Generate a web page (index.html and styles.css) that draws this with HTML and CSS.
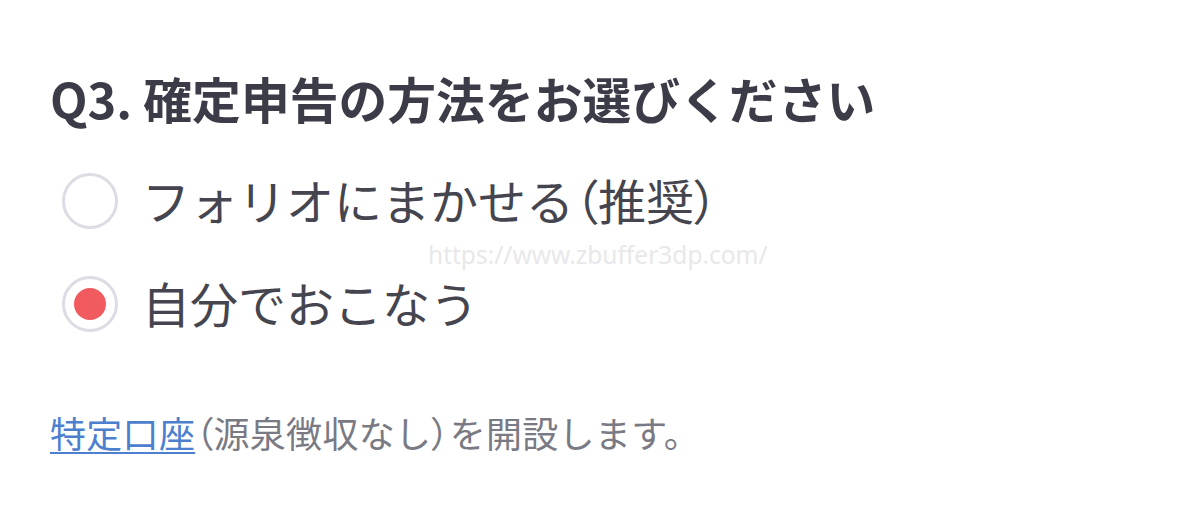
FILE: index.html
```html
<!DOCTYPE html>
<html lang="ja">
<head>
<meta charset="utf-8">
<link rel="stylesheet" href="styles.css">
</head>
<body>
<div class="page">
  <h1 class="question">Q3. 確定申告の方法をお選びください</h1>
  <ul class="options">
    <li class="option">
      <span class="radio"></span>
      <span class="label">フォリオにまかせる<span class="paren">（</span>推奨<span class="paren">）</span></span>
    </li>
    <li class="option">
      <span class="radio checked"><span class="dot"></span></span>
      <span class="label">自分でおこなう</span>
    </li>
  </ul>
  <p class="note"><a class="link" href="#">特定口座</a><span class="paren">（</span>源泉徴収なし<span class="paren">）</span>を開設します。</p>
  <div class="watermark">https://www.zbuffer3dp.com/</div>
</div>
</body>
</html>
```

FILE: styles.css
```css
* { box-sizing: border-box; }
html, body {
  margin: 0;
  padding: 0;
  background: #ffffff;
}
body {
  font-family: "Noto Sans CJK JP", "Noto Sans", sans-serif;
  width: 1200px;
  height: 506px;
  overflow: hidden;
}
.page {
  position: relative;
  padding: 68px 0 0 50px;
  height: 506px;
}
.question {
  margin: 0;
  font-size: 48.8px;
  line-height: 60px;
  font-weight: 700;
  color: #3c3c48;
}
.options {
  list-style: none;
  margin: 43px 0 0 0;
  padding: 0;
  display: flex;
  flex-direction: column;
  gap: 43px;
}
.option {
  display: flex;
  align-items: center;
  height: 60px;
  gap: 24px;
  padding-left: 12px;
}
.radio {
  width: 56px;
  height: 56px;
  border: 3px solid #dcdce4;
  border-radius: 50%;
  display: flex;
  align-items: center;
  justify-content: center;
  flex: none;
}
.dot {
  width: 32px;
  height: 32px;
  border-radius: 50%;
  background: #f15b5f;
}
.label {
  font-size: 48px;
  line-height: 56px;
  padding-bottom: 4px;
  color: #45454f;
}
.paren {
  font-feature-settings: "palt";
}
.note {
  margin: 78px 0 0 0;
  font-size: 36px;
  line-height: 40px;
  letter-spacing: 0.3px;
  color: #7a7a84;
}
.link {
  color: #4d7fcf;
  text-decoration: underline;
  text-underline-offset: 4px;
  text-decoration-thickness: 2px;
}
.watermark {
  position: absolute;
  left: 428px;
  top: 237px;
  font-family: "Noto Sans", sans-serif;
  font-size: 24.5px;
  line-height: 36px;
  color: #e8e8ea;
}
```
